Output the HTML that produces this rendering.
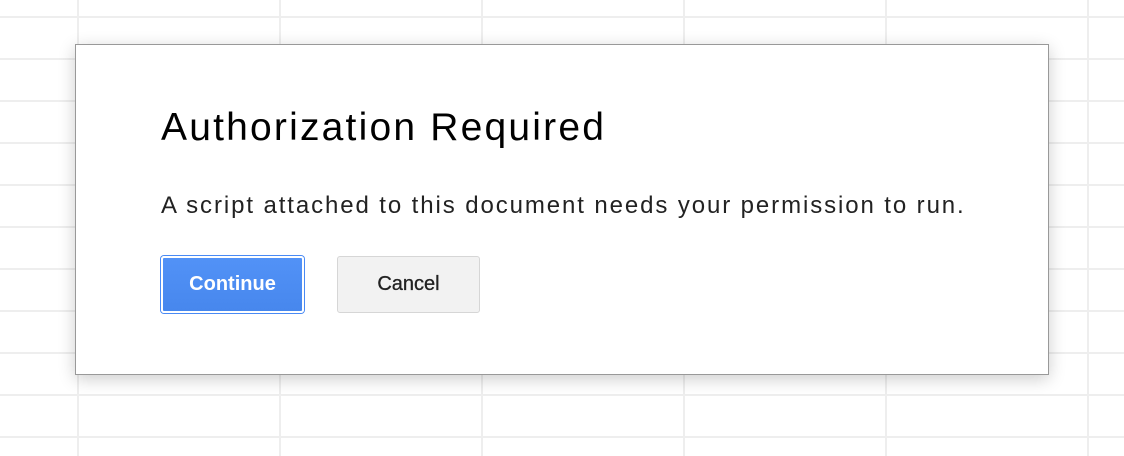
<!DOCTYPE html>
<html><head><style>
html,body{margin:0;padding:0}
body{width:1124px;height:456px;overflow:hidden;position:relative;background:#fff;font-family:"Liberation Sans",Arial,sans-serif;
background-image:linear-gradient(to right,#eeeeee 2px,transparent 2px),linear-gradient(to bottom,#eeeeee 2px,transparent 2px);
background-size:202px 42px;background-position:77px 16px;}
.dlg{position:absolute;left:75px;top:44px;width:972px;height:329px;background:#fff;border:1px solid #999;box-shadow:0 4px 16px rgba(0,0,0,.2)}
h1{position:absolute;left:85px;top:61px;margin:0;font-weight:normal;font-size:39px;color:#000;letter-spacing:2.2px;white-space:nowrap}
p{position:absolute;left:85px;top:147px;margin:0;font-size:24px;color:#222;letter-spacing:1.9px;white-space:nowrap}
.b{position:absolute;top:211px;width:143px;height:57px;box-sizing:border-box;border-radius:3px;font-size:20px;font-weight:bold;display:flex;align-items:center;justify-content:center}
.c{left:85px;background:linear-gradient(#5292f7,#4787ed);color:#fff;border:2px solid #fff;box-shadow:0 0 0 1px #4a8af4}
.x{left:261px;background:#f2f2f2;color:#222;border:1px solid #d6d6d6;font-weight:normal;-webkit-text-stroke:0.3px #222}
</style></head><body>
<div class="dlg">
<h1>Authorization Required</h1>
<p>A script attached to this document needs your permission to run.</p>
<div class="b c">Continue</div>
<div class="b x">Cancel</div>
</div>
</body></html>
